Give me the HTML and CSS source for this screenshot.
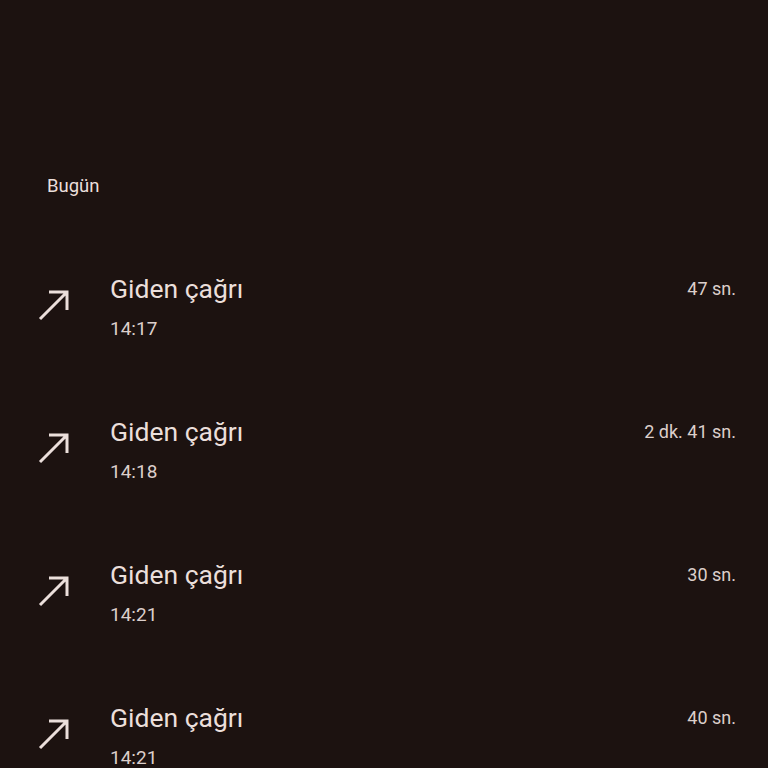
FILE: index.html
```html
<!DOCTYPE html>
<html lang="tr">
<head>
<meta charset="utf-8">
<link rel="stylesheet" href="styles.css">
</head>
<body>
<div class="screen">
  <div class="section-label">Bugün</div>
  <ul class="calls">
    <li class="call">
      <svg class="arrow" viewBox="0 0 32 32"><path d="M2 30 L29 3 M11 3 H29 V21" /></svg>
      <div class="info">
        <div class="title">Giden çağrı</div>
        <div class="time">14:17</div>
      </div>
      <div class="duration">47 sn.</div>
    </li>
    <li class="call">
      <svg class="arrow" viewBox="0 0 32 32"><path d="M2 30 L29 3 M11 3 H29 V21" /></svg>
      <div class="info">
        <div class="title">Giden çağrı</div>
        <div class="time">14:18</div>
      </div>
      <div class="duration">2 dk. 41 sn.</div>
    </li>
    <li class="call">
      <svg class="arrow" viewBox="0 0 32 32"><path d="M2 30 L29 3 M11 3 H29 V21" /></svg>
      <div class="info">
        <div class="title">Giden çağrı</div>
        <div class="time">14:21</div>
      </div>
      <div class="duration">30 sn.</div>
    </li>
    <li class="call">
      <svg class="arrow" viewBox="0 0 32 32"><path d="M2 30 L29 3 M11 3 H29 V21" /></svg>
      <div class="info">
        <div class="title">Giden çağrı</div>
        <div class="time">14:21</div>
      </div>
      <div class="duration">40 sn.</div>
    </li>
  </ul>
</div>
</body>
</html>
```

FILE: styles.css
```css
html, body {
  margin: 0;
  padding: 0;
  background: #1c1210;
  height: 100%;
  overflow: hidden;
}
.screen {
  font-family: Roboto, "Noto Sans", sans-serif;
  color: #ebdfdb;
  padding-top: 176px;
}
.section-label {
  font-size: 18.5px;
  line-height: 20px;
  padding-left: 47px;
  color: #ebdfdb;
}
.calls {
  list-style: none;
  margin: 39px 0 0 0;
  padding: 0;
}
.call {
  height: 143px;
  display: flex;
  align-items: center;
  padding: 0 32px 0 38px;
}
.arrow {
  width: 32px;
  height: 32px;
  flex: none;
  fill: none;
  stroke: #ebdfdb;
  stroke-width: 3;
  stroke-linecap: butt;
  margin-top: -4px;
}
.info {
  flex: 1;
  margin-left: 40px;
  display: flex;
  flex-direction: column;
  gap: 12px;
}
.title {
  font-size: 26.5px;
  line-height: 32px;
  color: #ebdfdb;
}
.time {
  font-size: 19px;
  line-height: 24px;
  color: #dccfcb;
}
.duration {
  align-self: flex-start;
  margin-top: 38px;
  font-size: 18px;
  line-height: 32px;
  color: #dccfcb;
}
```
